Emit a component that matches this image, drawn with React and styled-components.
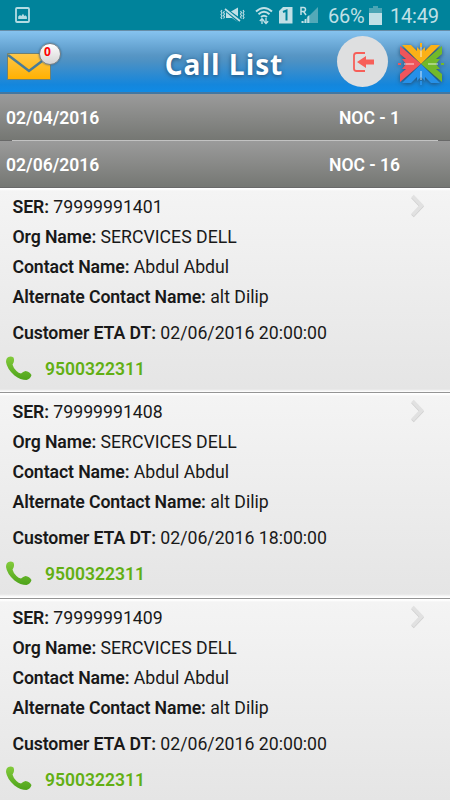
import React from 'react';
import styled, { createGlobalStyle } from 'styled-components';

const GlobalStyle = createGlobalStyle`
  * {
    box-sizing: border-box;
  }
  body {
    margin: 0;
    background: #e6e6e6;
    font-family: Roboto, sans-serif;
  }
`;

const Screen = styled.main`
  width: 450px;
  height: 800px;
  overflow: hidden;
`;

const StatusBar = styled.div`
  display: flex;
  align-items: center;
  height: 30px;
  padding-right: 10px;
  background: #00839b;
  color: #c0e0e6;
`;

const PhotoIcon = styled.svg`
  margin-left: 15px;
  margin-right: auto;
`;

const StatusIcon = styled.svg`
  margin-left: ${({ $gap }) => $gap}px;
`;

const StatusText = styled.span`
  width: ${({ $width }) => $width}px;
  margin-left: ${({ $gap }) => $gap}px;
  padding-top: 1px;
  font-size: 20px;
  line-height: 28px;
  letter-spacing: -0.2px;
  white-space: nowrap;
`;

const Header = styled.header`
  display: grid;
  grid-template-columns: 112px 1fr 112px;
  align-items: center;
  height: 64px;
  border-top: 1px solid #668da7;
  border-bottom: 2px solid #4377a0;
  background: linear-gradient(#86c3ef 0%, #5796c5 40%, #4c91c4 50%, #1486dc 88%, #108be5 100%);
`;

const Inbox = styled.div`
  position: relative;
  width: 62px;
  height: 61px;
`;

const Badge = styled.span`
  position: absolute;
  left: 39px;
  top: 12px;
  width: 22px;
  height: 22px;
  padding-right: 5px;
  border: 1px solid #747e85;
  border-radius: 50%;
  background: linear-gradient(#fff, #d3d3d3);
  box-shadow: 0 0 2px #35617e;
  color: #f00;
  font: bold 12px/15px "Open Sans", sans-serif;
  text-align: center;
`;

const Title = styled.h1`
  margin: 5px 2px 0 0;
  color: #fff;
  font: bold 28px/36px "Open Sans", sans-serif;
  letter-spacing: 1px;
  text-align: center;
  text-shadow: 0 1px 4px #234d70;
`;

const Actions = styled.div`
  display: flex;
  align-items: center;
`;

const LogoutButton = styled.button`
  display: flex;
  align-items: center;
  justify-content: center;
  flex-shrink: 0;
  width: 51px;
  height: 51px;
  margin-left: -1px;
  padding: 0;
  border: 0;
  border-radius: 50%;
  background: #dedfe0;
`;

const Logo = styled.svg`
  flex-shrink: 0;
  margin: 4px 0 0 9px;
  filter: drop-shadow(0 1px 2px #234d70);
`;

const DateRow = styled.div`
  display: flex;
  align-items: center;
  justify-content: space-between;
  height: 47px;
  padding: 1px 50px 0 6px;
  border-bottom: 1px solid #696969;
  background: linear-gradient(#9b9b9b, #757773);
  color: #fff;
  font-size: 17.5px;
  font-weight: 600;
`;

const Divider = styled.hr`
  height: 1px;
  margin: -1px 12px 0;
  border: 0;
  background: #c2c2c2;
`;

const Card = styled.article`
  display: flex;
  justify-content: space-between;
  height: 205.7px;
  padding: 3px 25px 0 6px;
  border-top: 1px solid #fff;
  border-bottom: 1px solid #949494;
  background: linear-gradient(#fff 0, #f4f4f4 2px, #e5e5e5 200px, #fff 203px);

  &:first-of-type {
    height: 205px;
  }
`;

const Details = styled.div`
  padding-left: 6.5px;
`;

const Field = styled.p`
  margin: ${({ $spaced }) => ($spaced ? 6 : 0)}px 0 0;
  color: #191919;
  font-size: 17.7px;
  line-height: 30px;
  white-space: nowrap;
`;

const Label = styled.span`
  font-weight: 600;
  letter-spacing: -0.1px;
`;

const Phone = styled.a`
  display: flex;
  align-items: center;
  height: 30px;
  margin: 6px 0 0 -6.5px;
  color: #62af13;
  font-size: 17.5px;
  font-weight: 600;
`;

const PhoneIcon = styled.svg`
  margin: -2px 13px 0 0;
`;

const Chevron = styled.svg`
  margin-top: 2px;
`;

const groups = [
  { date: '02/04/2016', count: 'NOC - 1' },
  { date: '02/06/2016', count: 'NOC - 16' },
];

const calls = [
  { ser: '79999991401', eta: '02/06/2016 20:00:00' },
  { ser: '79999991408', eta: '02/06/2016 18:00:00' },
  { ser: '79999991409', eta: '02/06/2016 20:00:00' },
];

function StatusIcons() {
  return (
    <>
      <PhotoIcon width="15" height="16" viewBox="0 0 15 16">
        <rect x="1" y="1" width="13" height="14" rx="1" fill="none" stroke="#b3dce3" strokeWidth="1.8" />
        <path d="M3.2 12V9.5L5 8l1.3 1L8 6.8 9.4 9l1-.8 1.5 1.6V12z" fill="#b3dce3" />
      </PhotoIcon>
      <StatusIcon $gap={0} width="25" height="16" viewBox="0 0 25 16" fill="none" stroke="#c0e0e6">
        <path d="M2 3l-1 1.500L2 6 1 7.500 2 9l-1 1.500L2 12M4.500 4l-1 1.500 1 1.500-1 1.500 1 1.500-1 1.500M23 3l1 1.500L23 6l1 1.500L23 9l1 1.500-1 1.500M20.500 4l1 1.500-1 1.500 1 1.500-1 1.500 1 1.500" strokeWidth="1.1" />
        <path d="M6 5h3l9 7.500V15l-6-4H6zM11 4.500L18 .5v9z" fill="#c0e0e6" stroke="none" />
        <path d="M5 2l14 12" stroke="#00839b" strokeWidth="3.5" />
        <path d="M5 2l15 12" strokeWidth="1.7" />
      </StatusIcon>
      <StatusIcon $gap={10} width="18" height="19" viewBox="0 0 18 19" fill="none" stroke="#c0e0e6" strokeWidth="2">
        <path d="M1 5.500q8-7 16 0M3.500 8.300q5.500-5 11 0M6 11q3-2.500 6 0" />
        <path d="M7 18v-5M4.800 15L7 12.700 9.200 15M11 12v5M8.800 15.200l2.200 2.300 2.200-2.300" strokeWidth="1.3" />
      </StatusIcon>
      <StatusIcon $gap={6} width="14" height="17" viewBox="0 0 14 17">
        <path d="M4 0h9.500v16.500H0V4z" fill="#c0e0e6" />
        <path d="M4 5l3.500-1.500v10" fill="none" stroke="#00839b" strokeWidth="2" />
      </StatusIcon>
      <StatusIcon $gap={7} width="19" height="18" viewBox="0 0 19 18">
        <path d="M18 1v16H2z" fill="#53a9b8" />
        <path d="M1 9V1.500h2.500q2 0 2 2t-2 2H1M3.500 5.500L6 9" fill="none" stroke="#c0e0e6" strokeWidth="1.5" />
        <path d="M1.500 17v-2h2v2zM4.700 17v-4h1.500v4zM7.300 17V10.700L9.300 9v8z" fill="#c0e0e6" />
      </StatusIcon>
      <StatusText $gap={9} $width={37}>66%</StatusText>
      <StatusIcon $gap={4} width="13" height="19" viewBox="0 0 13 19">
        <path d="M4 0h5v2h4v17H0V2h4z" fill="#4aa5b5" />
        <path d="M0 7h13v12H0z" fill="#c0e0e6" />
      </StatusIcon>
      <StatusText $gap={8} $width={50}>14:49</StatusText>
    </>
  );
}

function CrossLogo() {
  return (
    <Logo width="48" height="44" viewBox="0 0 48 44">
      <path d="M5 3h9l6 6V5l4 4 4-4v4l6-6h9L24 22z" fill="#fbb117" />
      <path d="M3 4l21 18L3 40v-8l6-5H5l4-5-4-5h4l-6-5z" fill="#ef555b" />
      <path d="M45 4L24 22l21 18v-8l-6-5h4l-4-5 4-5h-4l6-5z" fill="#72b92a" />
      <path d="M5 41l19-19 19 19h-9l-6-6v4l-4-4-4 4v-4l-6 6z" fill="#2690e8" />
      <path d="M24 5v10M24 29v9M7 22h10M31 22h10" stroke="#ffffff" strokeOpacity=".4" strokeWidth="2" />
      <path d="M24 1v4" stroke="#fbb117" strokeWidth="2" />
      <path d="M24 39v4" stroke="#2690e8" strokeWidth="2" />
      <path d="M1 22h3" stroke="#ef555b" strokeWidth="2" />
      <path d="M44 22h3" stroke="#72b92a" strokeWidth="2" />
    </Logo>
  );
}

function CallCard({ ser, eta }) {
  return (
    <Card>
      <Details>
        <Field><Label>SER:</Label> {ser}</Field>
        <Field><Label>Org Name:</Label> SERCVICES DELL</Field>
        <Field><Label>Contact Name:</Label> Abdul Abdul</Field>
        <Field><Label>Alternate Contact Name:</Label> alt Dilip</Field>
        <Field $spaced><Label>Customer ETA DT:</Label> {eta}</Field>
        <Phone>
          <PhoneIcon width="26" height="25" viewBox="0 0 26 25">
            <defs>
              <linearGradient id={ `phone-${ser}` } x1="0" y1="0" x2="0" y2="1">
                <stop offset="0" stopColor="#83cb3c" />
                <stop offset="1" stopColor="#4ea31a" />
              </linearGradient>
            </defs>
            <path
              d="M2.500 1Q5 0 7.500 1.500 9 5 6.500 8.500q1 4 4 6.500 2 2 4.500 2.500 2-2 4.500-2.500 4 .5 6 4-1 4-5 5-6 0-12-4.500Q1 13 0 6q0-4 2.500-5z"
              fill={ `url(#phone-${ser})` }
            />
          </PhoneIcon>
          9500322311
        </Phone>
      </Details>
      <Chevron width="15" height="25" viewBox="0 0 15 25" fill="none">
        <path d="M2.500 3l9 9.500-9 9.500" stroke="#cfcfcf" strokeWidth="3.6" />
        <path d="M2.500 2l9 9.500-9 9.500" stroke="#e1e1e1" strokeWidth="3.6" />
      </Chevron>
    </Card>
  );
}

export default function App() {
  return (
    <Screen>
      <GlobalStyle />
      <StatusBar>
        <StatusIcons />
      </StatusBar>
      <Header>
        <Inbox>
          <svg width="62" height="61" viewBox="0 0 62 61">
            <defs>
              <linearGradient id="mail" x1="0" y1="0" x2="0" y2="1">
                <stop offset="0" stopColor="#ffc84a" />
                <stop offset="1" stopColor="#ffb000" />
              </linearGradient>
            </defs>
            <path d="M7.500 22.500h43v26h-43z" fill="url(#mail)" stroke="#6f8072" />
            <path d="M8 24l21 16 21-16" fill="none" stroke="#487b98" strokeWidth="2.5" />
          </svg>
          <Badge>0</Badge>
        </Inbox>
        <Title>Call List</Title>
        <Actions>
          <LogoutButton>
            <svg width="22" height="22" viewBox="0 0 22 22">
              <path d="M13 2H4.500Q2 2 2 4.500v13Q2 20 4.500 20H13" fill="none" stroke="#f75f59" strokeWidth="1.8" />
              <path d="M5 11l9-6v3.500h8v5h-8V17z" fill="#f75f59" />
            </svg>
          </LogoutButton>
          <CrossLogo />
        </Actions>
      </Header>
      {groups.map(({ date, count }, index) => (
        <React.Fragment key={ date }>
          {index > 0 && <Divider />}
          <DateRow>
            <span>{date}</span>
            <span>{count}</span>
          </DateRow>
        </React.Fragment>
      ))}
      {calls.map((call) => <CallCard key={ call.ser } { ...call } />)}
    </Screen>
  );
}
